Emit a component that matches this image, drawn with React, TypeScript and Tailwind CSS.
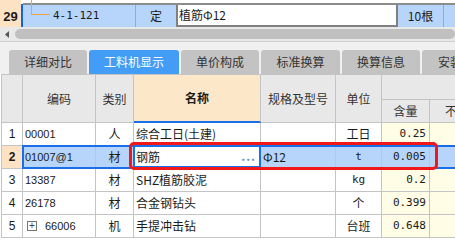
import React from "react";

const cjk = "font-['Noto_Sans_CJK_SC',sans-serif]";
const mono = "font-['DejaVu_Sans_Mono',monospace]";
const sans = "font-['Liberation_Sans',sans-serif]";

const tabs = [
  { label: "详细对比", w: "w-[78px]" },
  { label: "工料机显示", w: "w-[90px]", active: true },
  { label: "单价构成", w: "w-[78px]" },
  { label: "标准换算", w: "w-[79px]" },
  { label: "换算信息", w: "w-[78px]" },
  { label: "安装费用", w: "w-[80px]" },
];

type Row = {
  no: string;
  code: string;
  kind: string;
  name: string;
  spec: string;
  unit: string;
  unitMono?: boolean;
  qty: string;
  tree?: boolean;
};

const rows: Row[] = [
  { no: "1", code: "00001", kind: "人", name: "综合工日(土建)", spec: "", unit: "工日", qty: "0.25" },
  { no: "2", code: "01007@1", kind: "材", name: "钢筋", spec: "Φ12", unit: "t", unitMono: true, qty: "0.005" },
  { no: "3", code: "13387", kind: "材", name: "SHZ植筋胶泥", spec: "", unit: "kg", unitMono: true, qty: "0.2" },
  { no: "4", code: "26178", kind: "材", name: "合金钢钻头", spec: "", unit: "个", qty: "0.399" },
  { no: "5", code: "66006", kind: "机", name: "手提冲击钻", spec: "", unit: "台班", qty: "0.648", tree: true },
];

const cell = "border-r border-b border-[#c4c4c4] flex items-center overflow-hidden whitespace-nowrap";

export default function App() {
  return (
    <div className={`relative w-[455px] h-[251px] overflow-hidden bg-white text-[12px] text-[#1a1a1a] ${cjk}`}>
      {/* row 29 of the upper grid */}
      <div className="relative flex h-[27px]">
        <div className={`w-[21px] bg-[#fde3c4] flex items-end justify-center pb-[4px] font-bold text-[13px] leading-none ${sans}`}>
          29
        </div>
        <div className="w-[2px] mt-[4px] bg-[#1463e6]" />
        <div className="flex-1 flex flex-col">
          <div className="h-[3px] bg-white" />
          <div className="flex-1 flex border-t-2 border-[#8c8c8c] bg-[#b7d5fb]">
            <div className={`w-[113px] border-r border-[#a8a8a8] flex items-center pl-[30px] text-[11px] ${mono}`}>4-1-121</div>
            <div className="w-[40px] flex items-center justify-center">定</div>
            <div className="w-[222px] bg-white border-x-2 border-b-2 border-[#808080] flex items-center pl-[1px]">植筋Φ12</div>
            <div className="w-[46px] border-r border-[#a8a8a8] flex items-center justify-center">10根</div>
            <div className="flex-1" />
          </div>
        </div>
        <div className="absolute left-[31px] top-0 w-[1px] h-[15px] bg-[#f0a24c]" />
        <div className="absolute left-[31px] top-[14px] w-[19px] h-[1px] bg-[#f0a24c]" />
      </div>

      {/* horizontal scrollbar */}
      <div className="h-[15px] bg-[#e8e8e8] flex items-center border-b border-[#cfcfcf]">
        <svg width="4" height="7" viewBox="0 0 4 7" className="ml-[5px]">
          <polygon points="4,0 0,3.5 4,7" fill="#555" />
        </svg>
        <div className="ml-[6px] flex-1 h-[10px] rounded-full bg-[#c0c0c0]" />
      </div>

      {/* tabs */}
      <div className="h-[32px] bg-[#f0f0f0] flex items-end pl-[9px] gap-[2px]">
        {tabs.map((t) => (
          <div
            key={t.label}
            className={`${t.w} shrink-0 h-[24px] rounded-t-[3px] flex items-center justify-center ${
              t.active ? "bg-[#439cf6] text-white" : "bg-[#c3c3c3] text-[#333]"
            }`}
          >
            {t.label}
          </div>
        ))}
      </div>

      {/* material table */}
      <div className="ml-[1px] border-l border-t border-[#c4c4c4] grid grid-cols-[21px_73px_38px_127px_75px_46px_48px_90px] grid-rows-[25px_23px_23px_23px_23px_23px_23px]">
        <div className={`${cell} row-span-2 bg-[#e8e8e8]`} />
        <div className={`${cell} row-span-2 bg-[#e8e8e8] justify-center text-[#333]`}>编码</div>
        <div className={`${cell} row-span-2 bg-[#e8e8e8] justify-center text-[#333]`}>类别</div>
        <div className="row-span-2 border-r border-[#c4c4c4] border-b-2 border-b-[#1a6fe8] bg-[#fde7c9] flex items-center justify-center font-bold">
          名称
        </div>
        <div className={`${cell} row-span-2 bg-[#e8e8e8] justify-center text-[#333]`}>规格及型号</div>
        <div className={`${cell} row-span-2 bg-[#e8e8e8] justify-center text-[#333]`}>单位</div>
        <div className={`${cell} col-span-2 bg-[#e8e8e8]`} />
        <div className={`${cell} bg-[#e8e8e8] justify-center text-[#333]`}>含量</div>
        <div className={`${cell} bg-[#e8e8e8] pl-[15px] text-[#333]`}>不含税市场价</div>

        {rows.map((r) => {
          const sel = r.no === "2";
          const blue = "bg-[#b7d5fb]";
          return (
            <React.Fragment key={r.no}>
              <div className={`${cell} justify-center ${sel ? "bg-[#fde3c4] font-bold" : "bg-white"} text-[12px] ${sans}`}>{r.no}</div>
              <div className={`${cell} ${sel ? blue : "bg-white"} pl-[2px] text-[11px] ${sans}`}>
                {r.tree && (
                  <span className="ml-[2px] mr-[8px] w-[10px] h-[10px] border border-[#777] flex items-center justify-center text-[10px] leading-none text-[#444]">
                    +
                  </span>
                )}
                {r.code}
              </div>
              <div className={`${cell} justify-center ${sel ? blue : "bg-white"}`}>{r.kind}</div>
              <div className={`${cell} bg-white pl-[2px] justify-between`}>
                <span>{r.name}</span>
                {sel && <span className="mr-[4px] text-[#5f93c9] font-bold tracking-[1px] leading-none pb-[2px]">...</span>}
              </div>
              <div className={`${cell} ${sel ? blue : "bg-white"} pl-[2px]`}>{r.spec}</div>
              <div className={`${cell} justify-center ${sel ? blue : "bg-white"} ${r.unitMono ? `${mono} text-[11px]` : ""}`}>
                {r.unit}
              </div>
              <div className={`${cell} justify-end pr-[3px] ${sel ? blue : "bg-[#fffde6]"} text-[11px] ${mono}`}>{r.qty}</div>
              <div className={`${cell} ${sel ? blue : "bg-[#fffde6]"}`} />
            </React.Fragment>
          );
        })}
      </div>

      {/* selection of row 2 */}
      <div className="absolute left-[22px] top-[145px] w-[440px] h-[24px] border-2 border-[#1a6fe8]" />
      <div className="absolute left-[133px] top-[145px] w-[128px] h-[23px] border-2 border-[#1a6fe8]" />
      <div className="absolute left-[129px] top-[142px] w-[309px] h-[28px] border-[3px] border-[#f01818] rounded-[5px]" />
    </div>
  );
}
